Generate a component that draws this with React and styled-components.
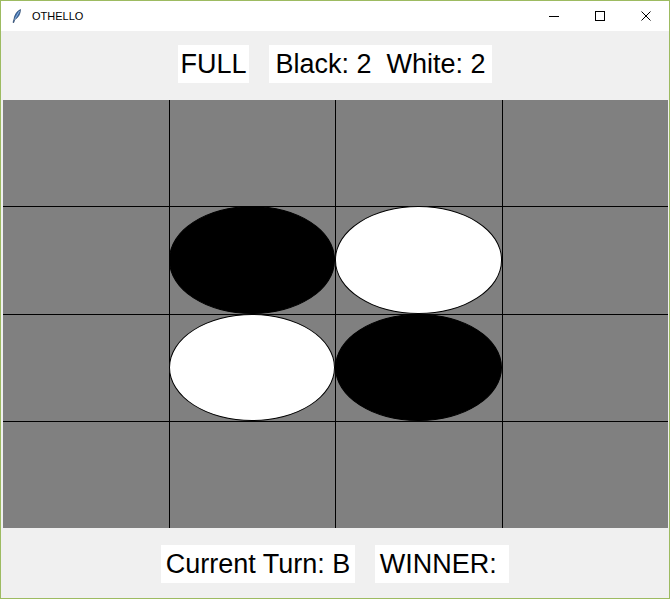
import styled, { createGlobalStyle } from "styled-components"

const GlobalStyle = createGlobalStyle`
    html, body {
        margin: 0;
        padding: 0;
        background-color: #FFF;
    }
`

const Window = styled.div`
    box-sizing: border-box;
    width: 670px;
    height: 599px;
    border: 1px solid #9dbb61;
    display: flex;
    flex-direction: column;
    font-family: "Liberation Sans", Arial, sans-serif;
    overflow: hidden;
`

const TitleBar = styled.div`
    height: 30px;
    background-color: #FFF;
    display: flex;
    align-items: center;
    flex-shrink: 0;
`

const AppIcon = styled.svg`
    width: 10px;
    height: 14px;
    margin: 0 10px 0 11px;
`

const WindowTitle = styled.span`
    font-size: 11px;
    color: #000;
    flex: 1;
`

const CaptionButton = styled.div`
    width: 46px;
    height: 30px;
    display: flex;
    align-items: center;
    justify-content: center;
`

const Content = styled.div`
    flex: 1;
    background-color: #F0F0F0;
    display: flex;
    flex-direction: column;
`

const LabelRow = styled.div`
    height: ${props => props.height}px;
    display: flex;
    justify-content: center;
    align-items: flex-start;
    gap: 20px;
    padding-top: ${props => props.top}px;
    box-sizing: border-box;
`

const Label = styled.div`
    background-color: #FFF;
    width: ${props => props.width}px;
    height: 38px;
    line-height: 38px;
    font-size: 27px;
    color: #000;
    text-align: center;
    white-space: pre;
`

const Board = styled.div`
    height: 428px;
    margin: 0 1px 0 2px;
    display: grid;
    grid-template-columns: repeat(4, 1fr);
    grid-template-rows: repeat(4, 1fr);
    gap: 1px;
    background-color: #000;
`

const Cell = styled.div`
    background-color: #808080;
    position: relative;
`

const Disc = styled.div`
    position: absolute;
    inset: -1px 0 0 -1px;
    box-sizing: border-box;
    border-radius: 50%;
    border: 1px solid #000;
    background-color: ${props => props.color === "W" ? "#FFF" : "#000"};
`

const board = [
    [null, null, null, null],
    [null, "B", "W", null],
    [null, "W", "B", null],
    [null, null, null, null],
]

function App() {
    return (
        <>
            <GlobalStyle />
            <Window>
                <TitleBar>
                    <AppIcon viewBox="0 0 10 14">
                        <path d="M8.5 0.5 C5 2 2.5 6 2 10 L1 13.5 L1.8 13.6 L2.8 10.5 C6 9 8.5 5 8.5 0.5 Z" fill="#3b6fb0" stroke="#1d3557" strokeWidth="0.6" />
                        <path d="M7.5 2 L2.6 10.6" stroke="#c9dcf0" strokeWidth="0.6" />
                    </AppIcon>
                    <WindowTitle>OTHELLO</WindowTitle>
                    <CaptionButton>
                        <svg width="12" height="12" viewBox="0 0 12 12"><path d="M1 6.5 H11" stroke="#000" strokeWidth="1" /></svg>
                    </CaptionButton>
                    <CaptionButton>
                        <svg width="12" height="12" viewBox="0 0 12 12"><rect x="1.5" y="1.5" width="9" height="9" fill="none" stroke="#000" strokeWidth="1" /></svg>
                    </CaptionButton>
                    <CaptionButton>
                        <svg width="12" height="12" viewBox="0 0 12 12"><path d="M1.5 1.5 L10.5 10.5 M10.5 1.5 L1.5 10.5" stroke="#000" strokeWidth="1" /></svg>
                    </CaptionButton>
                </TitleBar>
                <Content>
                    <LabelRow height={69} top={14}>
                        <Label width={71}>FULL</Label>
                        <Label width={223}>Black: 2  White: 2</Label>
                    </LabelRow>
                    <Board>
                        {board.flat().map((piece, i) => (
                            <Cell key={i}>
                                {piece && <Disc color={piece} />}
                            </Cell>
                        ))}
                    </Board>
                    <LabelRow height={70} top={17}>
                        <Label width={194}>Current Turn: B</Label>
                        <Label width={134}>WINNER: </Label>
                    </LabelRow>
                </Content>
            </Window>
        </>
    )
}

export default App
